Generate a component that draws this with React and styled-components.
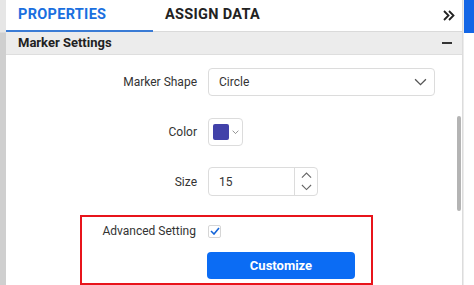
import React from 'react'
import styled, { createGlobalStyle } from 'styled-components'

const GlobalStyle = createGlobalStyle`
    html, body {
        margin: 0;
        padding: 0;
        background: #ffffff;
        overflow: hidden;
    }
    * {
        box-sizing: border-box;
    }
`

const ChevronDown = ({ size = 12, stroke = '#555' }) => (
    <svg width={size} height={size * 0.6} viewBox="0 0 12 7" fill="none">
        <polyline points="1,1 6,6 11,1" stroke={stroke} strokeWidth="1.2" />
    </svg>
)

const ChevronUp = ({ size = 12, stroke = '#555' }) => (
    <svg width={size} height={size * 0.6} viewBox="0 0 12 7" fill="none">
        <polyline points="1,6 6,1 11,6" stroke={stroke} strokeWidth="1.2" />
    </svg>
)

const App = () => {
    return (
        <>
            <GlobalStyle />
            <Page>
                <LeftStrip />
                <Panel>
                    <Tabs>
                        <Tab active>PROPERTIES</Tab>
                        <Tab>ASSIGN DATA</Tab>
                        <Collapse>
                            <svg width="12" height="11" viewBox="0 0 12 11" fill="none">
                                <polyline points="1,1 5.5,5.5 1,10" stroke="#222" strokeWidth="1.8" />
                                <polyline points="6,1 10.5,5.5 6,10" stroke="#222" strokeWidth="1.8" />
                            </svg>
                        </Collapse>
                    </Tabs>
                    <SectionHeader>
                        <span>Marker Settings</span>
                        <Minus />
                    </SectionHeader>
                    <Body>
                        <Row top={13}>
                            <Label>Marker Shape</Label>
                            <Select>
                                <span>Circle</span>
                                <ChevronDown size={13} />
                            </Select>
                        </Row>
                        <Row top={22}>
                            <Label>Color</Label>
                            <ColorPicker>
                                <Swatch color="#4141a9" />
                                <ChevronDown size={7} stroke="#666" />
                            </ColorPicker>
                        </Row>
                        <Row top={21}>
                            <Label>Size</Label>
                            <NumberBox>
                                <NumberValue>15</NumberValue>
                                <Spinner>
                                    <ChevronUp size={11} stroke="#666" />
                                    <ChevronDown size={11} stroke="#666" />
                                </Spinner>
                            </NumberBox>
                        </Row>
                        <Highlight>
                            <InnerRow>
                                <Label>Advanced Setting</Label>
                                <Checkbox>
                                    <svg width="10" height="8" viewBox="0 0 10 8" fill="none">
                                        <polyline points="1,4 4,7 9,1" stroke="#1565d8" strokeWidth="1.6" />
                                    </svg>
                                </Checkbox>
                            </InnerRow>
                            <InnerRow top={14}>
                                <span />
                                <Button>Customize</Button>
                            </InnerRow>
                        </Highlight>
                        <Scrollbar />
                    </Body>
                </Panel>
                <RightStrip>
                    <BlueTab />
                </RightStrip>
            </Page>
        </>
    )
}

export default App

const Page = styled.div`
    display: flex;
    width: 474px;
    height: 285px;
    font-family: Roboto, "Liberation Sans", sans-serif;
    color: #333;
    overflow: hidden;
`

const LeftStrip = styled.div`
    width: 6px;
    flex-shrink: 0;
    background: linear-gradient(to bottom, #e6e6e6 0, #e6e6e6 32px, #cfcfcf 33px, #cfcfcf 100%);
`

const Panel = styled.div`
    width: 457px;
    flex-shrink: 0;
    display: flex;
    flex-direction: column;
    border-right: 1px solid #dcdcdc;
    background: #fff;
`

const Tabs = styled.div`
    height: 33px;
    display: flex;
    align-items: stretch;
    border-bottom: 1px solid #dadada;
`

const Tab = styled.div`
    width: ${p => (p.active ? '147px' : 'auto')};
    padding: 0 13px 0 12px;
    display: flex;
    align-items: center;
    font-size: 14.5px;
    font-weight: 700;
    letter-spacing: 0.3px;
    color: ${p => (p.active ? '#1a6fdf' : '#222')};
    border-bottom: 2px solid ${p => (p.active ? '#3a7bd5' : 'transparent')};
    margin-bottom: -1px;
`

const Collapse = styled.div`
    margin-left: auto;
    display: flex;
    align-items: center;
    padding: 1px 7px 0 0;
`

const SectionHeader = styled.div`
    height: 24px;
    display: flex;
    align-items: center;
    justify-content: space-between;
    padding: 0 10px 0 12px;
    background: #ececec;
    border-bottom: 1px solid #dedede;
    font-size: 13px;
    font-weight: 700;
    color: #222;
`

const Minus = styled.span`
    width: 10px;
    height: 2px;
    background: #333;
`

const Body = styled.div`
    position: relative;
    flex: 1;
    display: flex;
    flex-direction: column;
`

const Row = styled.div`
    display: grid;
    grid-template-columns: 191px auto;
    column-gap: 11px;
    align-items: center;
    justify-items: start;
    margin-top: ${p => p.top || 0}px;
`

const Label = styled.div`
    justify-self: end;
    font-size: 12px;
    color: #333;
`

const Select = styled.div`
    width: 227px;
    height: 28px;
    border: 1px solid #dcdcdc;
    border-radius: 4px;
    display: flex;
    align-items: center;
    justify-content: space-between;
    padding: 0 7px 0 10px;
    font-size: 12px;
    color: #333;
`

const ColorPicker = styled.div`
    width: 35px;
    height: 28px;
    border: 1px solid #dcdcdc;
    border-radius: 4px;
    display: flex;
    align-items: center;
    gap: 3px;
    padding-left: 4px;
`

const Swatch = styled.div`
    width: 16px;
    height: 16px;
    border-radius: 2px;
    background: ${p => p.color};
`

const NumberBox = styled.div`
    width: 110px;
    height: 29px;
    border: 1px solid #dcdcdc;
    border-radius: 4px;
    display: flex;
    align-items: stretch;
`

const NumberValue = styled.div`
    flex: 1;
    display: flex;
    align-items: center;
    padding-left: 10px;
    font-size: 12px;
    color: #333;
`

const Spinner = styled.div`
    width: 23px;
    border-left: 1px solid #dcdcdc;
    display: flex;
    flex-direction: column;
    align-items: center;
    justify-content: center;
    gap: 5px;
`

const Highlight = styled.div`
    margin-top: 19px;
    margin-left: 74px;
    width: 293px;
    height: 70px;
    border: 2px solid #e8141b;
    padding-top: 7px;
`

const InnerRow = styled.div`
    display: grid;
    grid-template-columns: 114px auto;
    column-gap: 11px;
    align-items: center;
    justify-items: start;
    margin-top: ${p => p.top || 0}px;
`

const Checkbox = styled.div`
    width: 13px;
    height: 13px;
    border: 1px solid #d6d6d6;
    border-radius: 2px;
    display: flex;
    align-items: center;
    justify-content: center;
    margin-left: 1px;
`

const Button = styled.div`
    width: 148px;
    height: 27px;
    border-radius: 4px;
    background: #0b6cf4;
    color: #fff;
    font-size: 13px;
    font-weight: 700;
    display: flex;
    align-items: center;
    justify-content: center;
`

const Scrollbar = styled.div`
    position: absolute;
    right: 1px;
    top: 61px;
    width: 4px;
    height: 95px;
    border-radius: 2px;
    background: #b4b4b4;
`

const RightStrip = styled.div`
    flex: 1;
    background: #fff;
    border-left: 1px solid #ececec;
`

const BlueTab = styled.div`
    height: 33px;
    background: #1366e6;
`
